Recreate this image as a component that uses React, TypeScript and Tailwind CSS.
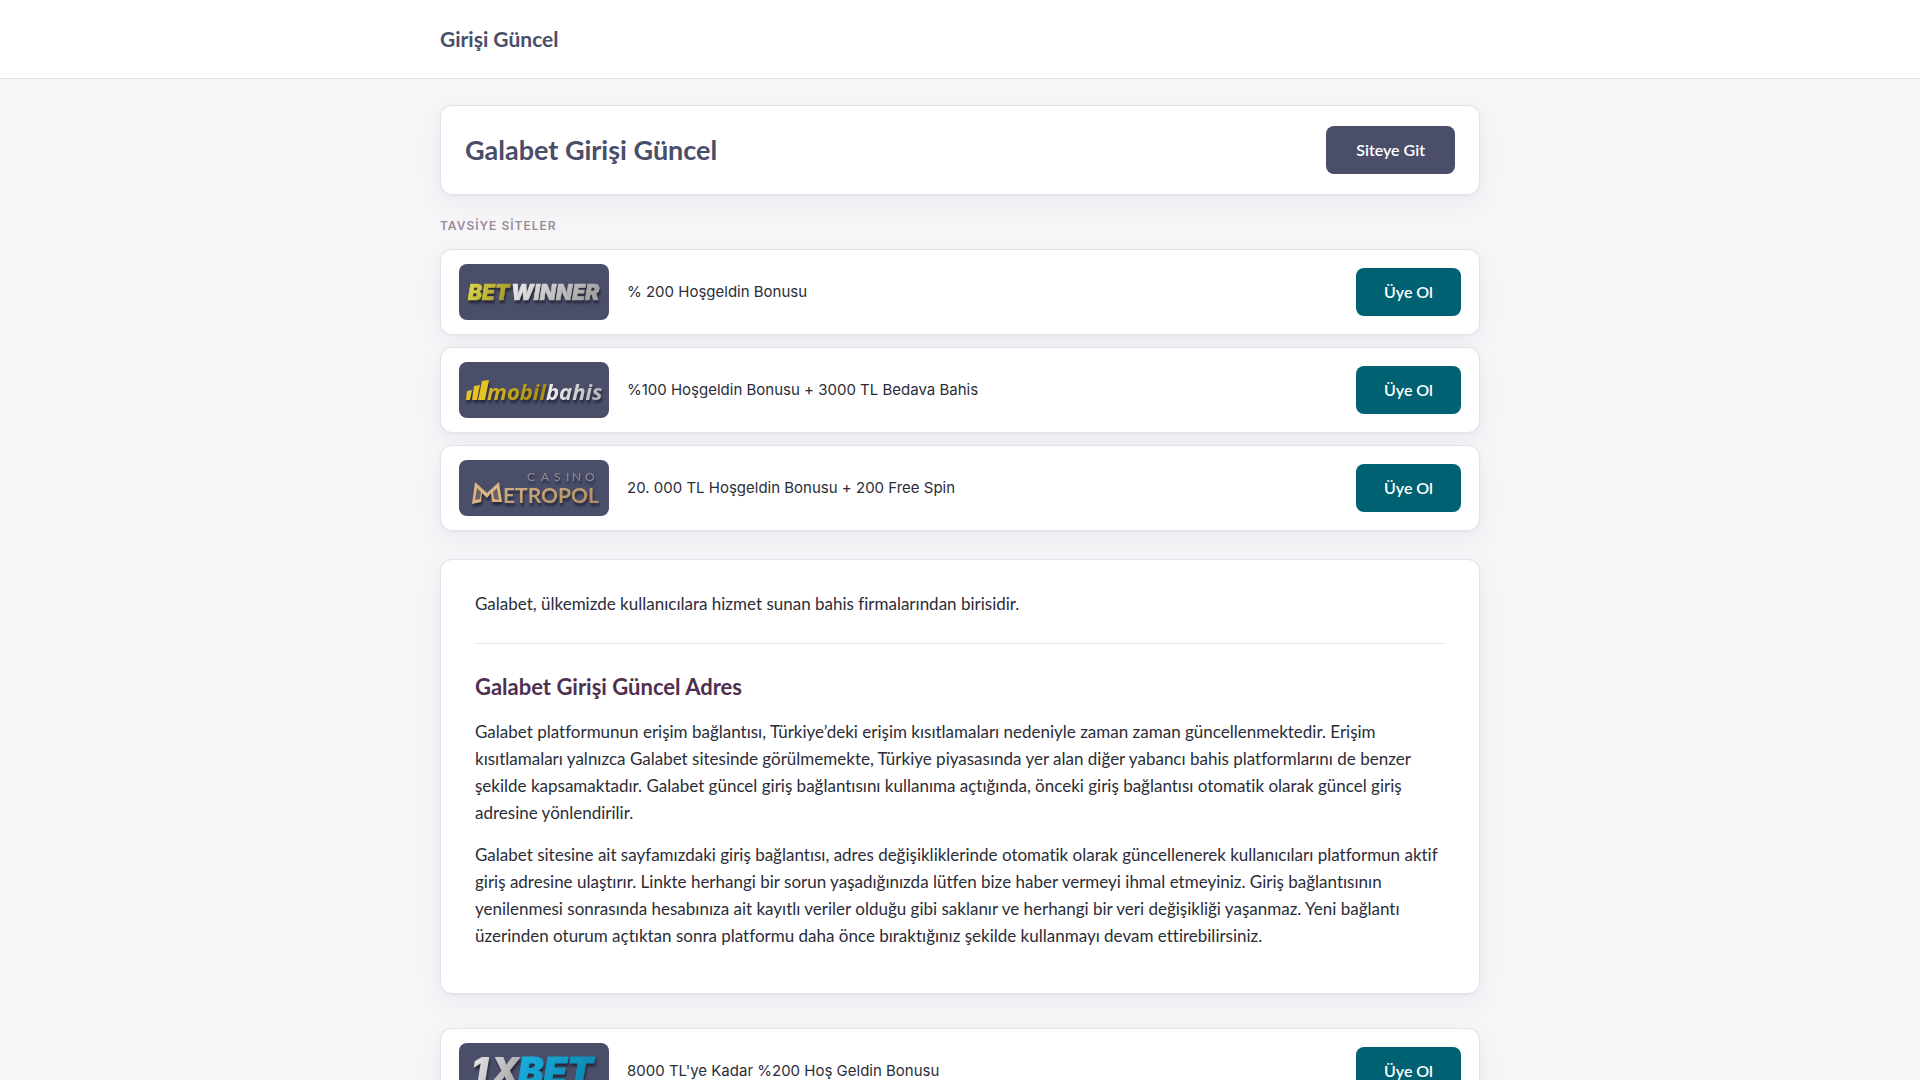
import React from 'react';

interface ISite {
    id: string;
    bonus: string;
    logo: React.ReactNode;
}

const svgProps = {
    viewBox: '0 0 150 56',
    role: 'img',
    className: 'w-full h-full drop-shadow-[1px_3px_1px_rgba(20,20,35,0.65)]'
};

const BetwinnerLogo = () => (
    <svg {...svgProps} aria-label="Betwinner">
        <defs>
            <linearGradient id="bw-yellow" x1="0" y1="0" x2="1" y2="0.3">
                <stop offset="0" stopColor="#e0d94a" />
                <stop offset="1" stopColor="#a39c2c" />
            </linearGradient>
            <linearGradient id="bw-silver" x1="0" y1="0" x2="1" y2="0.3">
                <stop offset="0" stopColor="#f1f1f1" />
                <stop offset="1" stopColor="#a2a2a2" />
            </linearGradient>
        </defs>
        <g className="font-[Inter] font-black italic text-[21px]">
            <text x="9" y="36" fill="url(#bw-yellow)" stroke="url(#bw-yellow)" strokeWidth="0.6">BET</text>
            <text x="52" y="36" fill="url(#bw-silver)" stroke="url(#bw-silver)" strokeWidth="0.6">WINNER</text>
        </g>
    </svg>
);

const MobilbahisLogo = () => (
    <svg {...svgProps} aria-label="Mobilbahis">
        <defs>
            <linearGradient id="mb-gold" x1="0" y1="0" x2="1" y2="0">
                <stop offset="0" stopColor="#d9b51f" />
                <stop offset="1" stopColor="#a98c12" />
            </linearGradient>
            <linearGradient id="mb-silver" x1="0" y1="0" x2="1" y2="0">
                <stop offset="0" stopColor="#f0f0f0" />
                <stop offset="1" stopColor="#b5b5b5" />
            </linearGradient>
        </defs>
        <path d="M8 29l5-1-2 10H7zM15 24l6-1-3 15h-5zM23 19l7-1-4 20h-7z" fill="#e6c325" />
        <g className="font-['Open_Sans'] font-bold italic text-[22px]">
            <text x="28" y="38" fill="url(#mb-gold)">mobil</text>
            <text x="87" y="38" fill="url(#mb-silver)">bahis</text>
        </g>
    </svg>
);

const MetropolLogo = () => (
    <svg {...svgProps} aria-label="Casino Metropol">
        <defs>
            <linearGradient id="cm-gold" x1="0" y1="0" x2="1" y2="1">
                <stop offset="0" stopColor="#d8b184" />
                <stop offset="1" stopColor="#a98a60" />
            </linearGradient>
        </defs>
        <text x="68 82 95 107 113 126" y="21" fill="#8c8c94" className="font-[Lato] font-normal text-[12px]">CASINO</text>
        <path d="M16 22l12 11 12-11 3 20h-10l-1-9-4 5-5-5-1 9-9 2z" fill="#dcb585" />
        <path d="M18 28l-2 12 5-1 1-7zM38 28l2 12-5-1-1-7z" fill="#6c6064" />
        <text x="44" y="43" fill="url(#cm-gold)" className="font-[Lato] font-bold text-[21px]">ETROPOL</text>
    </svg>
);

const OneXbetLogo = () => (
    <svg {...svgProps} aria-label="1xbet">
        <defs>
            <linearGradient id="ox-silver" x1="0" y1="0" x2="1" y2="0.5">
                <stop offset="0" stopColor="#eeeeee" />
                <stop offset="1" stopColor="#a8a8a8" />
            </linearGradient>
            <linearGradient id="ox-blue" x1="0" y1="0" x2="1" y2="0.5">
                <stop offset="0" stopColor="#1cb4e4" />
                <stop offset="1" stopColor="#0b87b0" />
            </linearGradient>
        </defs>
        <g className="font-[Inter] font-black italic text-[38px]">
            <text x="12 31" y="42" fill="url(#ox-silver)">1X</text>
            <text x="59" y="42" fill="url(#ox-blue)" stroke="url(#ox-blue)">BET</text>
        </g>
    </svg>
);

const topSites: ISite[] = [
    { id: 'betwinner', bonus: '% 200 Hoşgeldin Bonusu', logo: <BetwinnerLogo /> },
    { id: 'mobilbahis', bonus: '%100 Hoşgeldin Bonusu + 3000 TL Bedava Bahis', logo: <MobilbahisLogo /> },
    { id: 'metropol', bonus: '20. 000 TL Hoşgeldin Bonusu + 200 Free Spin', logo: <MetropolLogo /> }
];

const bottomSites: ISite[] = [
    { id: '1xbet', bonus: "8000 TL'ye Kadar %200 Hoş Geldin Bonusu", logo: <OneXbetLogo /> }
];

const Card = ({ className, children }: { className: string; children: React.ReactNode }) => (
    <div className={`bg-white border border-[#e2e2ea] rounded-xl shadow-[0_1px_3px_rgba(34,34,59,0.05),0_8px_24px_rgba(34,34,59,0.05)] ${className}`}>
        {children}
    </div>
);

const SiteList = ({ sites }: { sites: ISite[] }) => (
    <ul className="flex flex-col gap-3">
        {sites.map(site => (
            <li key={site.id}>
                <Card className="flex items-center gap-[18px] py-[14px] px-[18px]">
                    <div className="w-[150px] h-14 shrink-0 bg-[#4a4e69] rounded-lg overflow-hidden">{site.logo}</div>
                    <span className="flex-1 font-[Inter,sans-serif] text-[15px] leading-6">{site.bonus}</span>
                    <a href={`#${site.id}`} className="bg-[#006173] hover:bg-[#004f5e] text-white font-semibold px-7 py-3 rounded-lg">
                        Üye Ol
                    </a>
                </Card>
            </li>
        ))}
    </ul>
);

export default function App() {
    return (
        <div className="min-h-screen bg-[#f6f6f9] text-[#2b2d38] font-[Lato,sans-serif] [font-variant-ligatures:none]">
            <header className="bg-white border-b border-[#e2e2ea]">
                <div className="max-w-[1040px] mx-auto py-6">
                    <a href="#" className="block text-[21px] leading-[30px] font-bold text-[#4a4e69]">Girişi Güncel</a>
                </div>
            </header>

            <main className="max-w-[1040px] mx-auto pt-[26px] pb-10">
                <Card className="flex items-center justify-between py-5 px-6">
                    <h1 className="text-[27px] leading-9 font-bold text-[#4a4e69]">Galabet Girişi Güncel</h1>
                    <a href="#git" className="bg-[#4a4e69] hover:bg-[#3b3f56] text-white font-semibold px-[30px] py-3 rounded-lg">
                        Siteye Git
                    </a>
                </Card>

                <h2 className="mt-[22px] mb-[14px] font-[Inter] text-xs leading-[18px] font-semibold tracking-[1px] text-[#9a8c98]">TAVSİYE SİTELER</h2>
                <SiteList sites={topSites} />

                <Card className="mt-7 mb-[34px] px-[34px] pt-[30px] pb-[29px] text-[17px] leading-[27px]">
                    <p>Galabet, ülkemizde kullanıcılara hizmet sunan bahis firmalarından birisidir.</p>
                    <hr className="my-[26px] border-[#e2e2ea]" />
                    <h2 className="mb-[14px] text-[22px] leading-[34px] font-bold text-[#4f2f4f]">Galabet Girişi Güncel Adres</h2>
                    <p className="mb-[15px]">
                        Galabet platformunun erişim bağlantısı, Türkiye’deki erişim kısıtlamaları nedeniyle zaman zaman güncellenmektedir. Erişim
                        kısıtlamaları yalnızca Galabet sitesinde görülmemekte, Türkiye piyasasında yer alan diğer yabancı bahis platformlarını de benzer
                        şekilde kapsamaktadır. Galabet güncel giriş bağlantısını kullanıma açtığında, önceki giriş bağlantısı otomatik olarak güncel giriş
                        adresine yönlendirilir.
                    </p>
                    <p className="mb-[15px]">
                        Galabet sitesine ait sayfamızdaki giriş bağlantısı, adres değişikliklerinde otomatik olarak güncellenerek kullanıcıları platformun aktif
                        giriş adresine ulaştırır. Linkte herhangi bir sorun yaşadığınızda lütfen bize haber vermeyi ihmal etmeyiniz. Giriş bağlantısının
                        yenilenmesi sonrasında hesabınıza ait kayıtlı veriler olduğu gibi saklanır ve herhangi bir veri değişikliği yaşanmaz. Yeni bağlantı
                        üzerinden oturum açtıktan sonra platformu daha önce bıraktığınız şekilde kullanmayı devam ettirebilirsiniz.
                    </p>
                </Card>

                <SiteList sites={bottomSites} />
            </main>
        </div>
    );
}
